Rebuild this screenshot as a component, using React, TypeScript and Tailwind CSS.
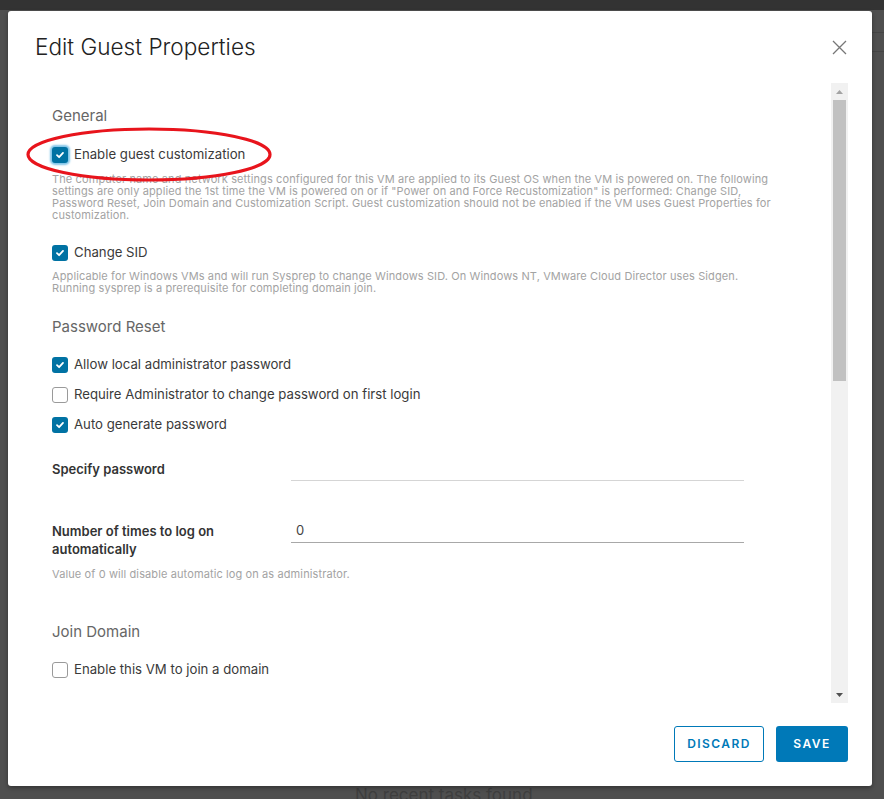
import { ReactNode } from "react";

const font = { fontFamily: "Inter, 'Open Sans', sans-serif" };

function Checkbox({ checked, focused }: { checked?: boolean; focused?: boolean }) {
  if (!checked) {
    return <span className="block h-4 w-4 shrink-0 rounded-[3px] border border-[#9a9a9a] bg-white" />;
  }
  return (
    <span
      className={`flex h-4 w-4 shrink-0 items-center justify-center rounded-[3px] bg-[#0072a3] ${
        focused ? "shadow-[0_0_2px_2px_#7fc4e8]" : ""
      }`}
    >
      <svg width="10" height="10" viewBox="0 0 10 10" fill="none">
        <path d="M2 5.2 L4.1 7.2 L8 2.9" stroke="white" strokeWidth="1.8" strokeLinecap="round" strokeLinejoin="round" />
      </svg>
    </span>
  );
}

function CheckRow({ label, checked, focused, className = "" }: { label: string; checked?: boolean; focused?: boolean; className?: string }) {
  return (
    <label className={`flex h-5 items-center gap-[6px] text-[13.2px] text-[#3a3a3a] ${className}`}>
      <Checkbox checked={checked} focused={focused} />
      <span>{label}</span>
    </label>
  );
}

function Heading({ children, className = "" }: { children: ReactNode; className?: string }) {
  return <h3 className={`h-5 text-[15px] leading-5 text-[#666] ${className}`}>{children}</h3>;
}

function Help({ lines, className = "" }: { lines: string[]; className?: string }) {
  return (
    <p className={`text-[11px] leading-[12px] tracking-[0.01em] text-[#a3a3a3] ${className}`}>
      {lines.map((l, i) => (
        <span key={i} className="block whitespace-nowrap">
          {l}
        </span>
      ))}
    </p>
  );
}

export default function App() {
  return (
    <div className="relative h-[799px] w-[884px] overflow-hidden bg-[#4f4f4f]" style={font}>
      {/* page behind the overlay */}
      <div className="h-[10px] bg-[#333]" />
      <div className="ml-auto mt-[22px] h-px w-[12px] bg-[#444]" />
      <div className="ml-auto mt-[18px] h-px w-[12px] bg-[#444]" />
      <div className="absolute bottom-[-6px] left-[355px] text-[17px] leading-5 text-[#3e3e3e]">No recent tasks found</div>

      {/* modal */}
      <div className="absolute left-[8px] top-[11px] flex h-[775px] w-[864px] flex-col rounded-[3px] bg-white shadow-[0_2px_4px_rgba(0,0,0,0.35)]">
        <div className="flex items-start justify-between pl-[27px] pr-[25px] pt-[22px]">
          <h2 className="text-[22.6px] font-light leading-7 text-[#222]">Edit Guest Properties</h2>
          <button className="mt-[7px] text-[#777]" aria-label="Close">
            <svg width="15" height="15" viewBox="0 0 15 15">
              <path d="M1 1 L14 14 M14 1 L1 14" stroke="#777" strokeWidth="1.3" />
            </svg>
          </button>
        </div>

        <div className="ml-[27px] mr-[24px] mt-[22px] flex h-[620px]">
          <div className="flex-1 overflow-hidden pl-[17px] pt-[23px]">
            <Heading>General</Heading>
            <CheckRow className="mt-[19px]" label="Enable guest customization" checked focused />
            <Help
              className="mt-[8px]"
              lines={[
                "The computer name and network settings configured for this VM are applied to its Guest OS when the VM is powered on. The following",
                "settings are only applied the 1st time the VM is powered on or if \"Power on and Force Recustomization\" is performed: Change SID,",
                "Password Reset, Join Domain and Customization Script. Guest customization should not be enabled if the VM uses Guest Properties for",
                "customization.",
              ]}
            />
            <CheckRow className="mt-[22px]" label="Change SID" checked />
            <Help
              className="mt-[7px]"
              lines={[
                "Applicable for Windows VMs and will run Sysprep to change Windows SID. On Windows NT, VMware Cloud Director uses Sidgen.",
                "Running sysprep is a prerequisite for completing domain join.",
              ]}
            />

            <Heading className="mt-[23px]">Password Reset</Heading>
            <div className="mt-[18px] flex flex-col gap-[10px]">
              <CheckRow label="Allow local administrator password" checked />
              <CheckRow label="Require Administrator to change password on first login" />
              <CheckRow label="Auto generate password" checked />
            </div>

            <div className="mt-[22px] flex">
              <div className="mt-[3px] w-[239px] text-[13px] font-semibold leading-[18px] text-[#333]">Specify password</div>
              <div className="h-6 w-[453px] border-b border-[#d5d5d5]" />
            </div>

            <div className="mt-[38px] flex">
              <div className="mt-[3px] w-[239px] text-[13px] font-semibold leading-[18px] text-[#333]">
                Number of times to log on
                <br />
                automatically
              </div>
              <div className="flex h-6 w-[453px] items-center border-b border-[#a8a8a8] pl-[5px] text-[13px] text-[#444]">0</div>
            </div>
            <Help className="mt-[10px]" lines={["Value of 0 will disable automatic log on as administrator."]} />

            <Heading className="mt-[42px]">Join Domain</Heading>
            <CheckRow className="mt-[18px]" label="Enable this VM to join a domain" />
          </div>

          {/* scrollbar */}
          <div className="flex w-[17px] flex-col bg-[#f1f1f1]">
            <div className="flex h-[17px] items-center justify-center">
              <svg width="7" height="4" viewBox="0 0 7 4">
                <path d="M0 4 L3.5 0 L7 4 Z" fill="#a3a3a3" />
              </svg>
            </div>
            <div className="mx-[2px] h-[281px] bg-[#c1c1c1]" />
            <div className="flex-1" />
            <div className="flex h-[17px] items-center justify-center">
              <svg width="7" height="4" viewBox="0 0 7 4">
                <path d="M0 0 L7 0 L3.5 4 Z" fill="#505050" />
              </svg>
            </div>
          </div>
        </div>

        <div className="flex justify-end gap-3 pr-[24px] pt-[23px]">
          <button className="h-9 w-[90px] rounded-[3px] border border-[#0079b8] text-[12px] font-semibold tracking-[0.12em] text-[#0079b8]">
            DISCARD
          </button>
          <button className="h-9 w-[72px] rounded-[3px] bg-[#0079b8] text-[12px] font-semibold tracking-[0.12em] text-white">
            SAVE
          </button>
        </div>

        {/* red annotation ellipse */}
        <svg className="pointer-events-none absolute left-[18px] top-[116px]" width="246" height="55" viewBox="0 0 246 55">
          <ellipse cx="123" cy="27.5" rx="121" ry="25.5" fill="none" stroke="#e8141c" strokeWidth="3.2" />
        </svg>
      </div>
    </div>
  );
}
